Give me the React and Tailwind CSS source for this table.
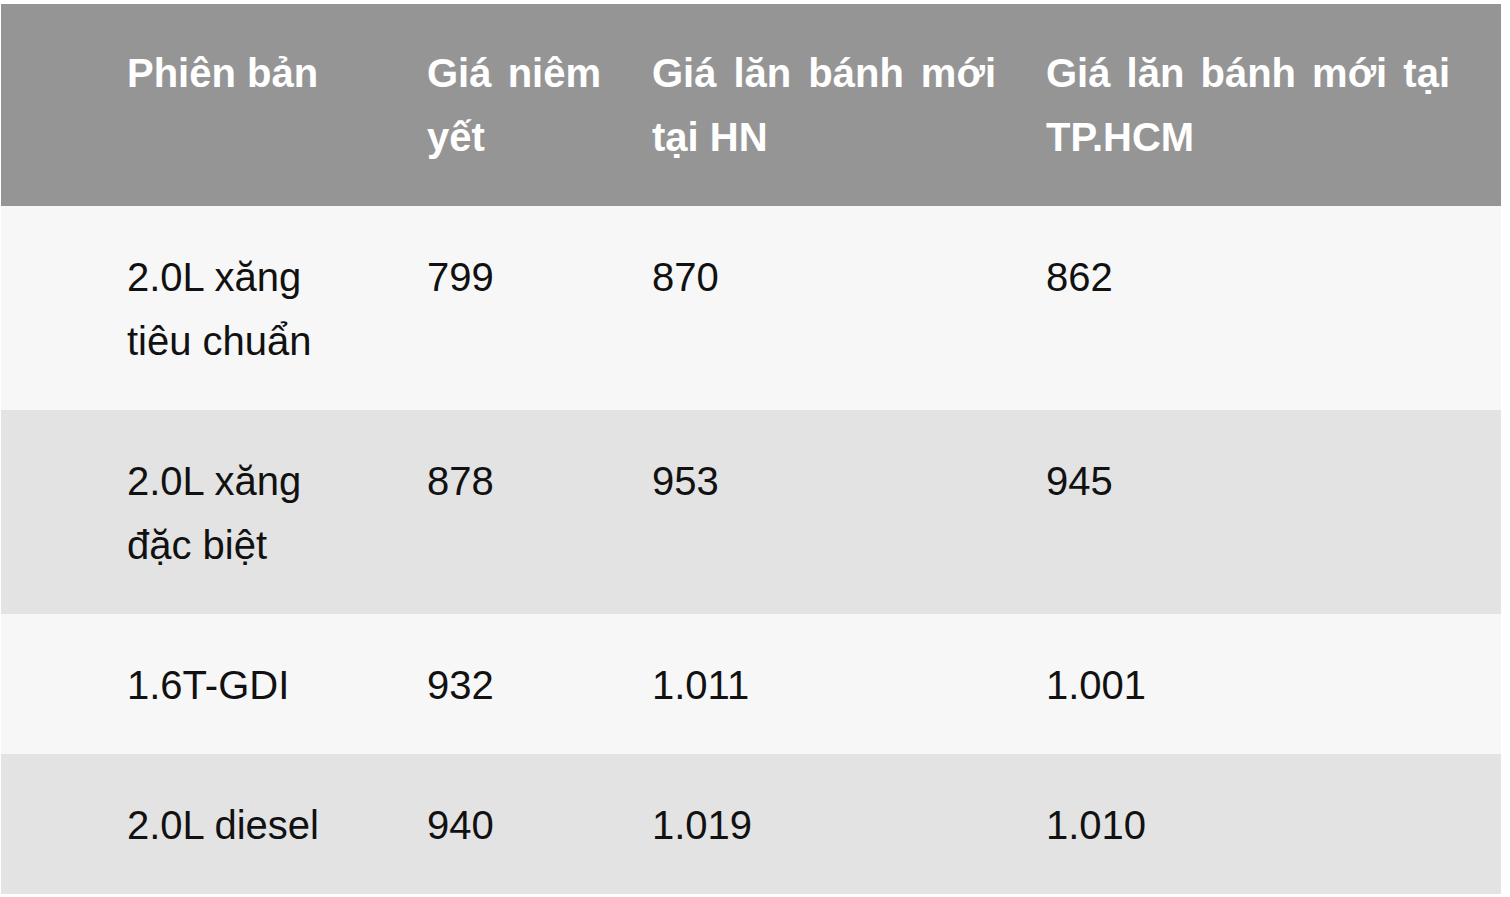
export default function App() {
  const rows = [
    ["2.0L xăng tiêu chuẩn", "799", "870", "862"],
    ["2.0L xăng đặc biệt", "878", "953", "945"],
    ["1.6T-GDI", "932", "1.011", "1.001"],
    ["2.0L diesel", "940", "1.019", "1.010"],
  ];
  const colPad = [
    "pl-[126px] pr-[60px]",
    "pl-[26px] pr-[25px]",
    "pl-[26px] pr-[25px]",
    "pl-[25px] pr-[51px]",
  ];
  const headers = ["Phiên bản", "Giá niêm yết", "Giá lăn bánh mới tại HN", "Giá lăn bánh mới tại TP.HCM"];
  return (
    <div className="min-h-screen bg-white pt-[4px] pl-[1px]" style={{ fontFamily: '"Liberation Sans", Arial, sans-serif' }}>
      <div className="w-[1500px] grid grid-cols-[400px_225px_395px_480px] text-[40px] leading-[64px]">
        {headers.map((h, i) => (
          <div key={i} className={`bg-[#959595] text-white font-bold text-justify pt-[37px] pb-[37px] ${colPad[i]}`}>
            {h}
          </div>
        ))}
        {rows.map((r, ri) =>
          r.map((c, ci) => (
            <div
              key={`${ri}-${ci}`}
              className={`${ri % 2 === 0 ? "bg-[#f7f7f7]" : "bg-[#e3e3e3]"} text-[#111111] pt-[39px] pb-[37px] ${colPad[ci]}`}
            >
              {c}
            </div>
          ))
        )}
      </div>
    </div>
  );
}
